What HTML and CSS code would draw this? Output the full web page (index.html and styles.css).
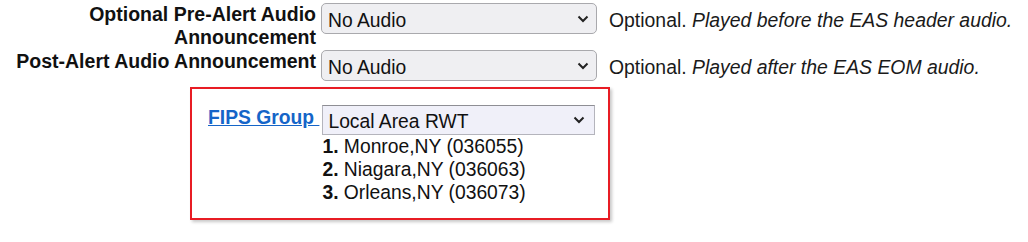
FILE: index.html
```html
<html>
<head>
  <title>EAS Audio Settings</title>
  <link rel="stylesheet" href="styles.css">
</head>
<body>
  <div class="form">
    <label class="label" for="preAlert">Optional Pre-Alert Audio Announcement</label>
    <span class="select-wrap">
      <select id="preAlert" class="select"><option>No Audio</option></select>
      <svg class="chevron" width="12" height="8" viewBox="0 0 12 8"><path d="M1.5 1.5 6 6l4.5-4.5" fill="none" stroke="#222" stroke-width="2"/></svg>
    </span>
    <p class="hint">Optional. <em>Played before the EAS header audio.</em></p>

    <label class="label" for="postAlert">Post-Alert Audio Announcement</label>
    <span class="select-wrap">
      <select id="postAlert" class="select"><option>No Audio</option></select>
      <svg class="chevron" width="12" height="8" viewBox="0 0 12 8"><path d="M1.5 1.5 6 6l4.5-4.5" fill="none" stroke="#222" stroke-width="2"/></svg>
    </span>
    <p class="hint">Optional. <em>Played after the EAS EOM audio.</em></p>
  </div>

  <div class="highlight">
    <a class="fips-label" href="#">FIPS Group&nbsp;</a>
    <div class="fips-field">
      <span class="select-wrap">
        <select class="select square"><option>Local Area RWT</option></select>
        <svg class="chevron" width="12" height="8" viewBox="0 0 12 8"><path d="M1.5 1.5 6 6l4.5-4.5" fill="none" stroke="#222" stroke-width="2"/></svg>
      </span>
      <ul class="fips-list">
        <li><b>1.</b> Monroe,NY (036055)</li>
        <li><b>2.</b> Niagara,NY (036063)</li>
        <li><b>3.</b> Orleans,NY (036073)</li>
      </ul>
    </div>
  </div>
</body>
</html>
```

FILE: styles.css
```css
body {
  margin: 0;
  padding: 3px 0 0 0;
  font-family: "Liberation Sans", Arial, sans-serif;
  color: #111;
  background: #fff;
}
.form {
  display: grid;
  grid-template-columns: 316px 276px auto;
  column-gap: 5px;
  row-gap: 1px;
  align-items: start;
}
.label {
  font-size: 19.5px;
  font-weight: bold;
  line-height: 23px;
  text-align: right;
}
.select-wrap {
  position: relative;
  display: block;
}
.select {
  display: block;
  width: 100%;
  height: 31px;
  margin: 0;
  padding: 4px 30px 0 6px;
  -webkit-appearance: none;
  appearance: none;
  font-family: "Liberation Sans", Arial, sans-serif;
  font-size: 19.3px;
  color: #111;
  background: #efeff2;
  border: 1px solid #a9a9ad;
  border-radius: 5px;
}
.chevron {
  position: absolute;
  right: 8px;
  top: 12px;
  pointer-events: none;
}
.hint {
  margin: 2px 0 0 7px;
  font-size: 19.4px;
  line-height: 31px;
  color: #1a1a1a;
  white-space: nowrap;
}
.highlight {
  display: flex;
  width: 420px;
  box-sizing: border-box;
  margin: 4px 0 0 190px;
  padding: 16px 0 14px 16px;
  border: 2px solid #e81c24;
  box-shadow: 2px 2px 3px rgba(0, 0, 0, .22);
}
.fips-label {
  flex: none;
  margin-right: 3px;
  padding-top: 2px;
  font-size: 19.3px;
  font-weight: bold;
  line-height: 22px;
  color: #1565c8;
}
.fips-field {
  width: 273px;
}
.select.square {
  height: 30px;
  padding-top: 3px;
  padding-left: 5px;
  background: #f0f0f9;
  border: 1px solid #b4b4bc;
  border-top-color: #8e8e94;
  border-radius: 0;
}
.fips-field .chevron {
  right: 10px;
  top: 11px;
}
.fips-list {
  margin: 0;
  padding: 0;
  list-style: none;
  font-size: 19.3px;
  line-height: 23px;
}
```
